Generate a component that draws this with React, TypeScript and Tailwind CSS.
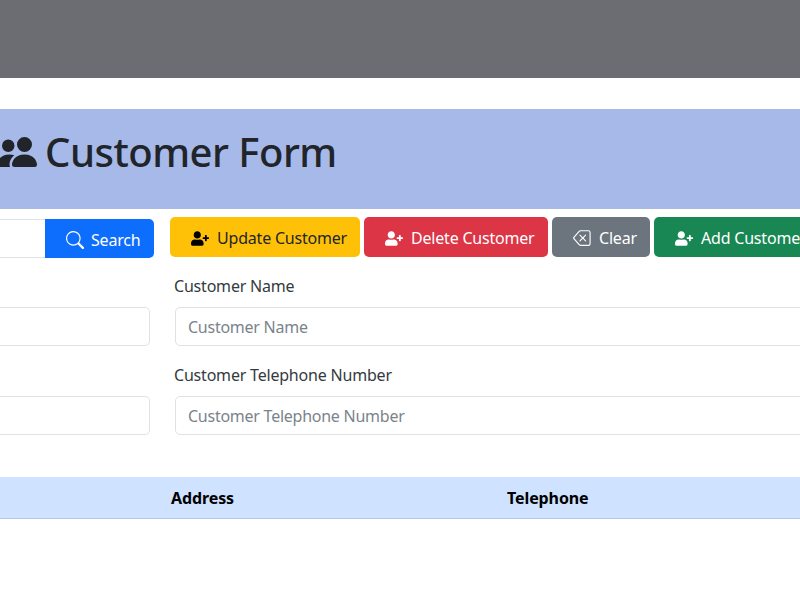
import { BsBackspace, BsPeopleFill, BsSearch } from "react-icons/bs";
import { FaUserPlus } from "react-icons/fa";

const buttons = [
    { label: "Update Customer", icon: FaUserPlus, width: "w-[190px]", color: "bg-[#ffc107] text-[#212529]", iconClass: "h-[15px] w-[18px] text-black" },
    { label: "Delete Customer", icon: FaUserPlus, width: "w-[184px]", color: "bg-[#dc3545] text-white", iconClass: "h-[15px] w-[18px] text-white" },
    { label: "Clear", icon: BsBackspace, width: "w-[98px]", color: "bg-[#6c757d] text-white", iconClass: "h-[18px] w-[18px] text-white" },
    { label: "Add Customer", icon: FaUserPlus, width: "w-[168px]", color: "bg-[#198754] text-white", iconClass: "h-[15px] w-[18px] text-white" },
];

function Field({ label }: { label: string }) {
    return (
        <div className="flex gap-[25px]">
            <div className="w-[150px] shrink-0 pt-[32px]">
                <input className="block h-[39px] w-full rounded-r-[5px] border border-l-0 border-[#dee2e6] bg-white" />
            </div>
            <div className="w-[800px] shrink-0">
                <label className="-ml-px -mt-px block h-[33px] leading-[24px] tracking-[-0.2px] text-[#343a40]">{label}</label>
                <input
                    placeholder={label}
                    className="block h-[39px] w-full rounded-[5px] border border-[#dee2e6] bg-white px-3 text-[16px] tracking-[-0.25px] text-[#212529] placeholder:text-[#7b838a]"
                />
            </div>
        </div>
    );
}

export default function App() {
    return (
        <div className="h-[600px] w-[800px] overflow-hidden bg-white font-['Noto_Sans',sans-serif] text-[16px]">
            <div className="h-[78px] bg-[#6c6d72]"></div>

            <div className="mt-[31px] flex h-[100px] items-center bg-[#a6b9e9] pb-[14px] text-[#212529]">
                <BsPeopleFill className="-ml-[3px] h-10 w-10 shrink-0" />
                <h1 className="ml-2 text-[40px] leading-none font-medium tracking-[-0.5px]">Customer Form</h1>
            </div>

            {/* Search and actions */}
            <div className="mt-2 flex items-start">
                <div className="mt-[2px] flex h-[39px] w-[154px] shrink-0">
                    <input className="h-full w-[45px] border-y border-[#dee2e6] bg-white" />
                    <button className="flex w-[109px] items-center gap-[7px] rounded-r-[5px] bg-[#0d6efd] pl-[21px] pt-[2px] tracking-[-0.2px] text-white">
                        <BsSearch className="h-[18px] w-[18px]" />
                        Search
                    </button>
                </div>
                <div className="ml-4 flex shrink-0 gap-1">
                    {buttons.map((button) => (
                        <button
                            key={button.label}
                            className={`flex h-[40px] items-center gap-2 rounded-[5px] pl-[21px] pt-[2px] tracking-[-0.2px] whitespace-nowrap ${button.width} ${button.color}`}
                        >
                            <button.icon className={button.iconClass} />
                            {button.label}
                        </button>
                    ))}
                </div>
            </div>

            <div className="mt-[17px] flex flex-col gap-[18px]">
                <Field label="Customer Name" />
                <Field label="Customer Telephone Number" />
            </div>

            {/* Table header */}
            <div className="mt-[42px] flex h-[42px] items-center border-b border-[#b6c8e6] bg-[#cfe2ff] font-bold tracking-[-0.1px] text-black">
                <div className="ml-[171px] w-[336px]">Address</div>
                <div>Telephone</div>
            </div>
        </div>
    );
}
